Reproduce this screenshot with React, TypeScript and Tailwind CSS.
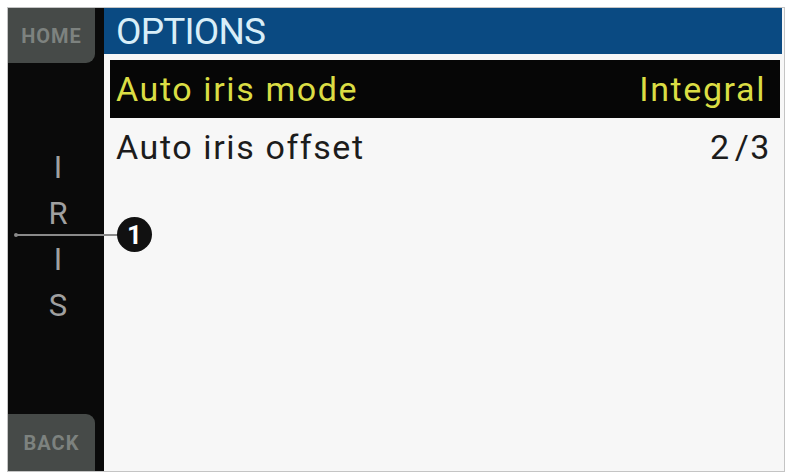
export default function App() {
  const font = { fontFamily: "Roboto, 'Liberation Sans', sans-serif" };
  return (
    <div className="relative w-[787px] h-[476px] bg-white pt-[7px] pl-[7px]" style={font}>
      {/* camera display frame */}
      <div className="flex w-[778px] h-[465px] border border-[#c4c4c4] bg-[#f7f7f7]">
        {/* left softkey column */}
        <div className="flex flex-col w-[96px] bg-[#0a0a0a]">
          <div className="h-[55px] w-[87px] bg-[#464a48] rounded-br-[9px] flex items-center justify-center">
            <span className="text-[20px] font-bold tracking-[1px] text-[#7d827f]">HOME</span>
          </div>
          <div className="flex-1 flex flex-col items-center justify-center pl-[4px] pb-[4px]">
            {["I", "R", "I", "S"].map((c, i) => (
              <span key={i} className="text-[31px] leading-[46px] text-[#a0a0a0]">
                {c}
              </span>
            ))}
          </div>
          <div className="h-[57px] w-[87px] bg-[#464a48] rounded-tr-[9px] flex items-center justify-center">
            <span className="text-[20px] font-bold tracking-[1px] text-[#7d827f]">BACK</span>
          </div>
        </div>
        {/* menu area */}
        <div className="flex-1 flex flex-col pr-[2px]">
          <div className="h-[46px] bg-[#0a4a82] flex items-center pl-[12px]">
            <span className="text-[37px] tracking-[-0.8px] text-[#d9eef8] leading-none">OPTIONS</span>
          </div>
          <div className="flex flex-col pt-[6px] pl-[6px] pr-[2px]">
            <div className="h-[58px] bg-[#060606] flex items-center justify-between pl-[6px] pr-[14px]">
              <span className="text-[34px] tracking-[1.6px] text-[#dadd44]">Auto iris mode</span>
              <span className="text-[34px] tracking-[1.6px] text-[#dadd44]">Integral</span>
            </div>
            <div className="h-[58px] flex items-center justify-between pl-[6px] pr-[9px]">
              <span className="text-[34px] tracking-[1.6px] text-[#1c1c1c]">Auto iris offset</span>
              <span className="text-[34px] tracking-[1.6px] text-[#1c1c1c]">
                2<span className="ml-[4px]">/3</span>
              </span>
            </div>
          </div>
        </div>
      </div>
      {/* callout marker */}
      <div className="absolute left-[15px] top-[234px] w-[104px] h-[2px] bg-[#8a8a8a]" />
      <div className="absolute left-[14px] top-[233px] w-[4px] h-[4px] rounded-full bg-[#8a8a8a]" />
      <div className="absolute left-[117px] top-[217px] w-[35px] h-[35px] rounded-full bg-[#111] flex items-center justify-center">
        <span className="text-white font-bold text-[26px] leading-none">1</span>
      </div>
    </div>
  );
}
